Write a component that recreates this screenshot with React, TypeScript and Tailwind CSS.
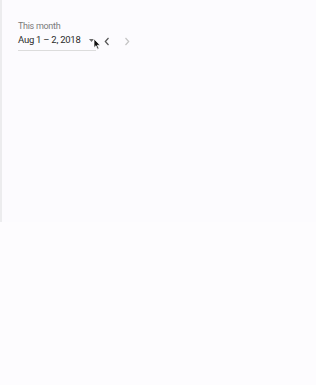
import React from "react";

export default function App() {
  return (
    <div className="w-[316px] h-[385px] bg-[#fdfcfe] overflow-hidden" style={{ fontFamily: "Roboto, 'Liberation Sans', sans-serif" }}>
      <div className="h-[222px] border-l-2 border-[#ececee] bg-[#fcfbfe] pl-[16px] pt-[21px]">
        <div className="text-[9px] leading-[10px] tracking-[-0.3px] text-[#7a7a7a] whitespace-nowrap">This month</div>
        <div className="flex items-center mt-[3px]">
          <div className="relative flex items-start w-[78px] h-[17px] border-b border-[#dcdcdc]">
            <span className="text-[9.5px] leading-[12px] tracking-[-0.25px] text-[#2b2b2b] whitespace-nowrap">Aug 1 – 2, 2018</span>
            <svg className="absolute left-[71px] top-[5px]" width="5" height="3" viewBox="0 0 5 3">
              <path d="M0 0 L5 0 L2.5 3 Z" fill="#6b6b6b" />
            </svg>
            <svg className="absolute left-[75px] top-[4px]" width="8" height="12" viewBox="0 0 8 12">
              <path d="M1 1 L1 9.6 L3 7.7 L4.6 11.2 L5.9 10.6 L4.3 7.2 L7.1 7.2 Z" fill="#111" stroke="#fff" strokeWidth="0.7" />
            </svg>
          </div>
          <svg className="ml-[8px] -mt-[3px]" width="6" height="9" viewBox="0 0 6 9">
            <path d="M4.5 1 L1.3 4.5 L4.5 8" fill="none" stroke="#555" strokeWidth="1.2" />
          </svg>
          <svg className="ml-[14px] -mt-[3px]" width="6" height="9" viewBox="0 0 6 9">
            <path d="M1.5 1 L4.7 4.5 L1.5 8" fill="none" stroke="#c4c4c4" strokeWidth="1.2" />
          </svg>
        </div>
      </div>
    </div>
  );
}
